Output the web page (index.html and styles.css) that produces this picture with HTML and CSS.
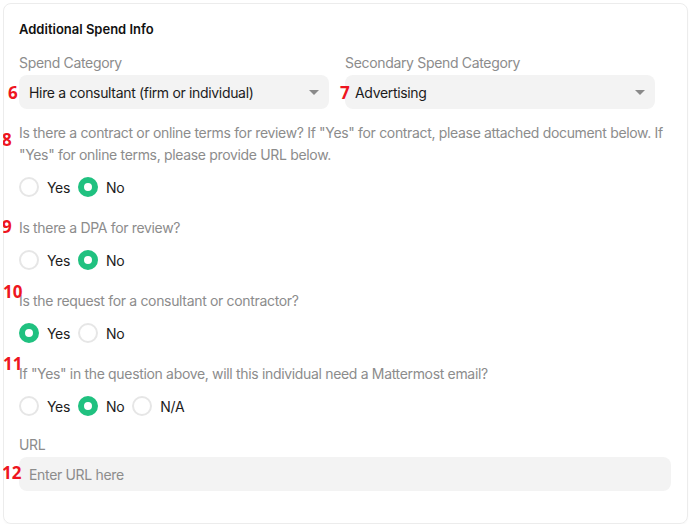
FILE: index.html
```html
<!DOCTYPE html>
<html>
<head>
<meta charset="utf-8">
<link rel="stylesheet" href="styles.css">
</head>
<body>
<div class="card">
  <h2 class="title">Additional Spend Info</h2>
  <div class="row2">
    <div class="field">
      <div class="label">Spend Category</div>
      <div class="select">
        <span>Hire a consultant (firm or individual)</span>
        <span class="caret"></span>
        <span class="anno anno-6">6</span>
      </div>
    </div>
    <div class="field">
      <div class="label">Secondary Spend Category</div>
      <div class="select">
        <span>Advertising</span>
        <span class="caret"></span>
        <span class="anno anno-7">7</span>
      </div>
    </div>
  </div>

  <div class="q">
    <div class="qtext">Is there a contract or online terms for review? If "Yes" for contract, please attached document below. If "Yes" for online terms, please provide URL below.<span class="anno anno-8">8</span></div>
    <div class="radios">
      <span class="radio"></span><span class="rlabel">Yes</span>
      <span class="radio on"></span><span class="rlabel">No</span>
    </div>
  </div>

  <div class="q">
    <div class="qtext">Is there a DPA for review?<span class="anno anno-9">9</span></div>
    <div class="radios">
      <span class="radio"></span><span class="rlabel">Yes</span>
      <span class="radio on"></span><span class="rlabel">No</span>
    </div>
  </div>

  <div class="q">
    <div class="qtext">Is the request for a consultant or contractor?<span class="anno anno-10">10</span></div>
    <div class="radios">
      <span class="radio on"></span><span class="rlabel">Yes</span>
      <span class="radio"></span><span class="rlabel">No</span>
    </div>
  </div>

  <div class="q">
    <div class="qtext">If "Yes" in the question above, will this individual need a Mattermost email?<span class="anno anno-11">11</span></div>
    <div class="radios">
      <span class="radio"></span><span class="rlabel">Yes</span>
      <span class="radio on"></span><span class="rlabel">No</span>
      <span class="radio"></span><span class="rlabel">N/A</span>
    </div>
  </div>

  <div class="field url">
    <div class="label">URL</div>
    <div class="input">
      <span class="ph">Enter URL here</span>
      <span class="anno anno-12">12</span>
    </div>
  </div>
</div>
</body>
</html>
```
FILE: styles.css
```css
* { box-sizing: border-box; }
html, body { background: #ffffff; }
body {
  margin: 3px;
  font-family: Inter, "Noto Sans", sans-serif;
  font-size: 14px;
  letter-spacing: -0.33px;
  color: #1c1c1c;
}
.card {
  width: 685px;
  height: 521px;
  border: 1px solid #ececec;
  border-radius: 8px;
  padding: 15px 16px 0 15px;
  box-shadow: 0 1px 2px rgba(0,0,0,0.03);
}
.title {
  margin: 0 0 14px 0;
  font-size: 13px;
  font-weight: 600;
  line-height: 20px;
  letter-spacing: 0;
  color: #111;
}
.row2 {
  display: grid;
  grid-template-columns: 310px 310px;
  column-gap: 16px;
}
.label {
  line-height: 20px;
  color: #8c8c8c;
  margin-bottom: 2px;
}
.select {
  position: relative;
  height: 34px;
  background: #f3f3f3;
  border-radius: 8px;
  display: flex;
  align-items: center;
  justify-content: space-between;
  padding: 0 10px;
  color: #1c1c1c;
}
.caret {
  width: 0;
  height: 0;
  border-left: 5px solid transparent;
  border-right: 5px solid transparent;
  border-top: 5px solid #8a8a8a;
}
.anno {
  position: absolute;
  font-family: "Open Sans", "DejaVu Sans", sans-serif;
  font-weight: 700;
  font-size: 17px;
  line-height: 17px;
  letter-spacing: 0;
  color: #ee1520;
}
.anno-6 { left: -11px; top: 9px; }
.anno-7 { left: -5px; top: 9px; }
.q { margin-top: 13px; }
.q + .q { margin-top: 16px; }
.qtext {
  position: relative;
  line-height: 22px;
  color: #8c8c8c;
}
.anno-8 { left: -17px; top: 9px; }
.anno-9 { left: -17px; top: 1px; }
.anno-10 { left: -16px; top: -7px; }
.anno-11 { left: -16px; top: -8px; }
.radios {
  margin-top: 7px;
  height: 28px;
  display: flex;
  align-items: center;
}
.radio {
  width: 20px;
  height: 20px;
  border-radius: 50%;
  border: 2px solid #e6e6e6;
  background: #fff;
  flex: none;
}
.radio.on {
  border: 6px solid #20c180;
  background: #fff;
}
.rlabel {
  margin-left: 8px;
  margin-right: 8px;
  color: #1c1c1c;
}
.url { margin-top: 15px; }
.input {
  position: relative;
  height: 34px;
  background: #f3f3f3;
  border-radius: 8px;
  display: flex;
  align-items: center;
  padding: 0 10px;
}
.ph { color: #8c8c8c; }
.anno-12 { left: -17px; top: 7px; }
```
